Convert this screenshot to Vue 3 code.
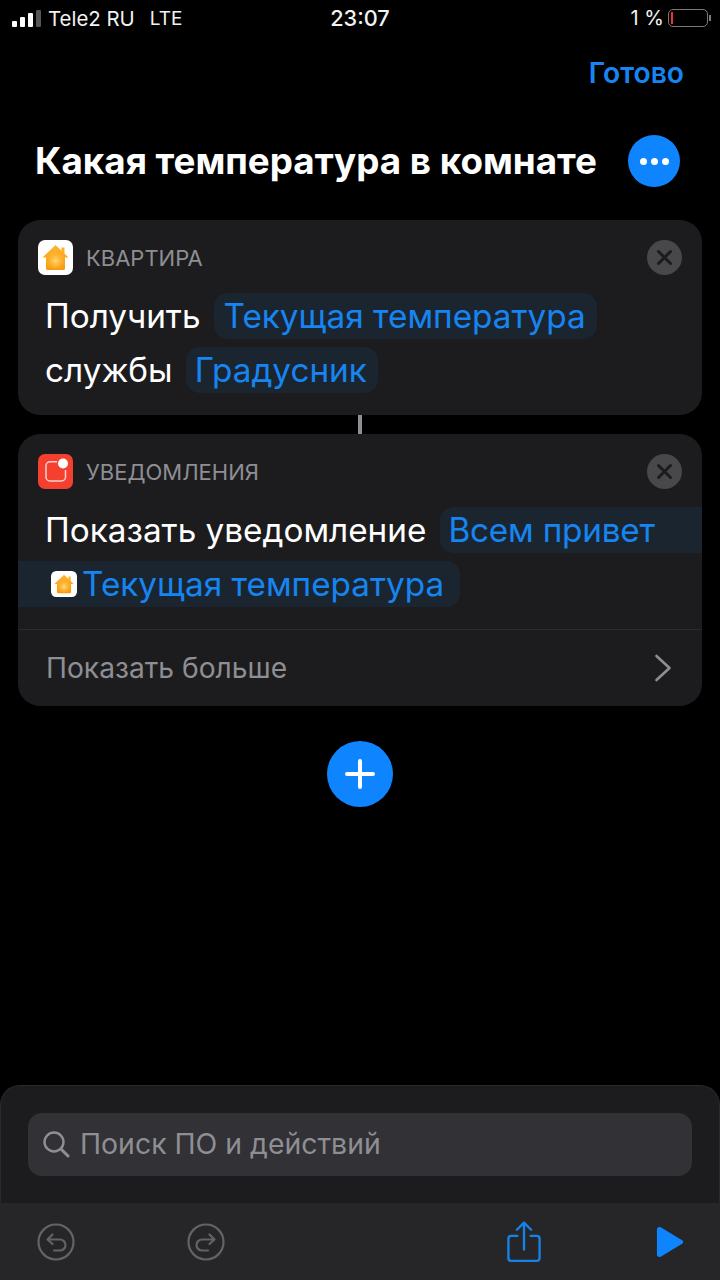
<script setup>
const signalBars = [6, 10, 14, 17]
</script>

<template>
  <div class="screen">
    <div class="status">
      <div class="status-left">
        <div class="signal">
          <i v-for="(h, n) in signalBars" :key="n" :class="{ off: n === 3 }" :style="{ height: h + 'px' }"></i>
        </div>
        <span class="carrier">Tele2 RU</span>
        <span class="net">LTE</span>
      </div>
      <div class="clock">23:07</div>
      <div class="status-right">
        <span class="pct">1 %</span>
        <div class="battery"><b></b></div>
        <div class="nub"></div>
      </div>
    </div>

    <div class="nav"><span class="done">Готово</span></div>

    <div class="title-row">
      <h1>Какая температура в комнате</h1>
      <div class="more"><i></i><i></i><i></i></div>
    </div>

    <section class="card">
      <div class="card-head">
        <svg class="app-icon" viewBox="0 0 35 35">
          <defs>
            <linearGradient id="homeA" x1="0" y1="0" x2="0" y2="1">
              <stop offset="0" stop-color="#ffb52e" />
              <stop offset="1" stop-color="#f79a12" />
            </linearGradient>
            <radialGradient id="homeB" cx="0.5" cy="0.6" r="0.5">
              <stop offset="0" stop-color="#ffdc7a" />
              <stop offset="1" stop-color="#ffb52e" stop-opacity="0" />
            </radialGradient>
          </defs>
          <rect width="35" height="35" rx="7" fill="#fff" />
          <path d="M4.500 17.500 17.500 5 23.500 10.700V7.500h3V13.600L30.500 17.500h-3.500V28.500a1.500 1.500 0 0 1-1.500 1.500H9.500a1.500 1.500 0 0 1-1.500-1.500V17.500z" fill="url(#homeA)" />
          <circle cx="17.500" cy="19" r="10" fill="url(#homeB)" />
        </svg>
        <span class="app-name">КВАРТИРА</span>
        <div class="close">
          <svg viewBox="0 0 35 35" width="35" height="35"><path d="M11.500 11.500l12 12M23.500 11.500l-12 12" stroke="#1c1c1e" stroke-width="3" stroke-linecap="round" /></svg>
        </div>
      </div>
      <div class="line first">
        <span class="word">Получить</span>
        <span class="pill">Текущая температура</span>
      </div>
      <div class="line">
        <span class="word">службы</span>
        <span class="pill tight">Градусник</span>
      </div>
      <div class="card-end"></div>
    </section>

    <div class="link"></div>

    <section class="card">
      <div class="card-head">
        <svg class="app-icon" viewBox="0 0 35 35">
          <rect width="35" height="35" rx="7" fill="#f5402f" />
          <path d="M19 7.800H12a4 4 0 0 0-4 4V23a4 4 0 0 0 4 4h11.500a4 4 0 0 0 4-4V16" fill="none" stroke="#ffd2cc" stroke-width="1.500" />
          <circle cx="25" cy="9.500" r="5" fill="#fff" />
        </svg>
        <span class="app-name">УВЕДОМЛЕНИЯ</span>
        <div class="close">
          <svg viewBox="0 0 35 35" width="35" height="35"><path d="M11.500 11.500l12 12M23.500 11.500l-12 12" stroke="#1c1c1e" stroke-width="3" stroke-linecap="round" /></svg>
        </div>
      </div>
      <div class="line first">
        <span class="word">Показать уведомление</span>
        <span class="pill open-end">Всем привет</span>
      </div>
      <div class="line">
        <span class="pill open-start">
          <svg class="mini-icon" viewBox="0 0 35 35">
            <rect width="35" height="35" rx="7" fill="#fff" />
            <path d="M4.500 17.500 17.500 5 23.500 10.700V7.500h3V13.600L30.500 17.500h-3.500V28.500a1.500 1.500 0 0 1-1.500 1.500H9.500a1.500 1.500 0 0 1-1.500-1.500V17.500z" fill="url(#homeA)" />
            <circle cx="17.500" cy="19" r="10" fill="url(#homeB)" />
          </svg>
          Текущая температура
        </span>
      </div>
      <div class="more-row">
        <span>Показать больше</span>
        <svg width="18" height="28" viewBox="0 0 18 28"><path d="M2.500 2 15.500 14 2.500 26" fill="none" stroke="#8e8e93" stroke-width="2.600" stroke-linecap="round" stroke-linejoin="round" /></svg>
      </div>
    </section>

    <div class="add">
      <svg width="30" height="30" viewBox="0 0 30 30"><path d="M15 2v26M2 15h26" stroke="#fff" stroke-width="4" stroke-linecap="round" /></svg>
    </div>

    <div class="spacer"></div>

    <div class="search-panel">
      <div class="search">
        <svg width="28" height="28" viewBox="0 0 28 28"><circle cx="12" cy="12" r="9.500" fill="none" stroke="#8e8e93" stroke-width="2.400" /><path d="M19 19l7 7" stroke="#8e8e93" stroke-width="3" stroke-linecap="round" /></svg>
        <span>Поиск ПО и действий</span>
      </div>
    </div>

    <div class="toolbar">
      <div class="history">
        <svg width="38" height="38" viewBox="0 0 38 38" fill="none" stroke="#636366" stroke-width="2.200" stroke-linecap="round" stroke-linejoin="round"><circle cx="19" cy="19" r="17.500" /><path d="M15.500 11.500 10.500 16.500 15.500 21M11 16.500h12a5.500 5.500 0 0 1 0 11h-6" /></svg>
        <svg width="38" height="38" viewBox="0 0 38 38" fill="none" stroke="#636366" stroke-width="2.200" stroke-linecap="round" stroke-linejoin="round"><circle cx="19" cy="19" r="17.500" /><path d="M22.500 11.500 27.500 16.500 22.500 21M27 16.500H15a5.500 5.500 0 0 0 0 11h6" /></svg>
      </div>
      <div class="actions">
        <svg width="34" height="42" viewBox="0 0 36 44" fill="none" stroke="#1582ea" stroke-width="2.500" stroke-linecap="round" stroke-linejoin="round"><path d="M18 30V2M10.500 9 18 1.500 25.500 9M11 15.500H4.500a3 3 0 0 0-3 3V39a3 3 0 0 0 3 3h27a3 3 0 0 0 3-3V18.500a3 3 0 0 0-3-3H25" /></svg>
        <svg width="28" height="32" viewBox="0 0 30 34"><path d="M1 3.500C1 1.200 3 .300 5 1.300L28 15c1.500.9 1.500 3 0 4L5 32.700c-2 1-4 .1-4-2.200z" fill="#0f84ff" /></svg>
      </div>
    </div>
  </div>
</template>

<style scoped>
.screen {
  width: 720px;
  height: 1280px;
  display: flex;
  flex-direction: column;
  background: #000;
  color: #fff;
  font-family: Inter, "Noto Sans", "Liberation Sans", sans-serif;
  overflow: hidden;
}

.status {
  height: 36px;
  display: grid;
  grid-template-columns: 1fr auto 1fr;
  align-items: center;
  font-size: 20px;
  color: #f2f2f2;
}
.status-left {
  display: flex;
  align-items: center;
  padding-left: 12px;
}
.signal {
  display: flex;
  align-items: flex-end;
  gap: 3px;
  height: 17px;
}
.signal i {
  width: 5px;
  border-radius: 1px;
  background: #fff;
}
.signal i.off {
  background: #555;
}
.carrier {
  margin-left: 7px;
  font-size: 20.400px;
}
.net {
  margin-left: 15px;
  font-size: 19px;
}
.clock {
  font-weight: 500;
  font-size: 21.700px;
}
.status-right {
  display: flex;
  align-items: center;
  justify-content: flex-end;
  padding-right: 9px;
}
.pct {
  font-size: 20px;
  margin-right: 4px;
}
.battery {
  width: 40px;
  height: 18px;
  box-sizing: border-box;
  border: 1.500px solid #7a7a7a;
  border-radius: 5px;
  padding: 2px;
}
.battery b {
  display: block;
  width: 2px;
  height: 100%;
  background: #f2303a;
}
.nub {
  width: 2px;
  height: 6px;
  margin-left: 1px;
  background: #7a7a7a;
}

.nav {
  height: 74px;
  display: flex;
  align-items: center;
  justify-content: flex-end;
  padding-right: 36px;
}
.done {
  color: #1685f2;
  font-size: 28.200px;
  font-weight: 600;
}

.title-row {
  height: 102px;
  margin-bottom: 8px;
  display: flex;
  align-items: center;
  justify-content: space-between;
  padding: 0 40px 2px 35px;
  box-sizing: border-box;
}
h1 {
  margin: 0;
  font-size: 36.800px;
  font-weight: 700;
  white-space: nowrap;
}
.more {
  width: 52px;
  height: 52px;
  margin-bottom: -2px;
  border-radius: 50%;
  background: #0f84ff;
  display: flex;
  align-items: center;
  justify-content: center;
  gap: 4px;
}
.more i {
  width: 7px;
  height: 7px;
  border-radius: 50%;
  background: #fff;
}

.card {
  margin: 0 18px;
  border-radius: 22px;
  background: #1c1c1e;
  overflow: hidden;
}
.card-head {
  display: flex;
  align-items: center;
  height: 35px;
  padding: 20px 20px 0;
}
.app-icon {
  width: 35px;
  height: 35px;
  flex: none;
}
.app-name {
  margin-left: 13px;
  font-size: 22px;
  color: #8e8e93;
}
.close {
  margin-left: auto;
  width: 35px;
  height: 35px;
  border-radius: 50%;
  background: #48484a;
}

.line {
  display: flex;
  align-items: center;
  height: 46px;
  margin-top: 8px;
  padding-left: 27px;
  font-size: 33.300px;
  white-space: nowrap;
}
.line.first {
  margin-top: 18px;
}
.pill {
  display: inline-flex;
  align-items: center;
  height: 46px;
  margin-left: 14px;
  padding: 0 11px 0 9px;
  border-radius: 14px;
  background: #1b2530;
  color: #1685f2;
}
.pill.tight {
  margin-left: 13px;
}
.open-end {
  flex: 1;
  border-radius: 14px 0 0 14px;
  padding-left: 8px;
  letter-spacing: -0.200px;
}
.open-start {
  margin-left: -27px;
  padding-left: 33px;
  padding-right: 16px;
  border-radius: 0 14px 14px 0;
  gap: 5px;
}
.mini-icon {
  width: 26px;
  height: 26px;
}
.card-end {
  height: 22px;
}
.more-row {
  margin-top: 22px;
  height: 76px;
  border-top: 1px solid #2c2c2e;
  padding: 0 30px 0 28px;
  display: flex;
  align-items: center;
  justify-content: space-between;
  color: #8e8e93;
  font-size: 28.200px;
}

.link {
  width: 4px;
  height: 19px;
  margin: 0 auto;
  background: #8e8e93;
}

.add {
  width: 66px;
  height: 66px;
  margin: 35px auto 0;
  border-radius: 50%;
  background: #0f84ff;
  display: flex;
  align-items: center;
  justify-content: center;
}

.spacer {
  flex: 1;
}

.search-panel {
  height: 118px;
  border: 1px solid #2a2a2c;
  border-bottom: 0;
  border-radius: 20px 20px 0 0;
  background: #1c1c1e;
  padding: 27px 27px 0;
  box-sizing: border-box;
}
.search {
  height: 63px;
  box-sizing: border-box;
  padding: 0 0 2px 14px;
  border-radius: 14px;
  background: #313136;
  display: flex;
  align-items: center;
  gap: 10px;
  color: #8e8e93;
  font-size: 28.400px;
}

.toolbar {
  height: 77px;
  background: #262628;
  display: flex;
  align-items: center;
  justify-content: space-between;
  padding: 0 36px 0 37px;
}
.history {
  display: flex;
  gap: 112px;
}
.actions {
  display: flex;
  align-items: center;
  gap: 115px;
}
</style>

<style>
html,
body {
  margin: 0;
  background: #000;
}
</style>
